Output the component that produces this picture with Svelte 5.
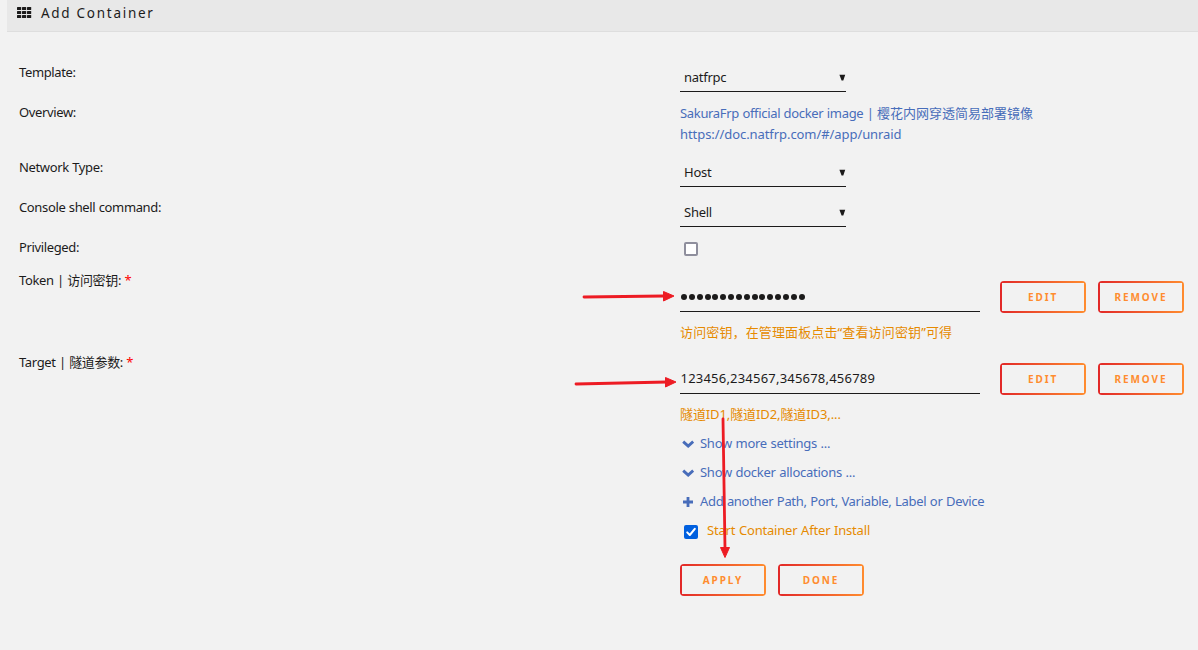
<script>
  const selects = { template: 'natfrpc', network: 'Host', shell: 'Shell' };
  const summary = 'SakuraFrp official docker image | ';
  const configs = [
    { label: 'Token | 访问密钥:', value: '●'.repeat(16), secret: true, help: '访问密钥，在管理面板点击“查看访问密钥”可得' },
    { label: 'Target | 隧道参数:', value: '123456,234567,345678,456789', secret: false, help: '隧道ID1,隧道ID2,隧道ID3,...' }
  ];
</script>

{#snippet select(value)}
  <div class="select"><span>{value}</span><svg width="7" height="7" viewBox="0 0 7 7"><path d="M0.4 0.7H6.2L4.3 6.6H2.6Z" fill="#1c1b1b" /></svg></div>
{/snippet}

{#snippet chevron()}
  <svg width="12" height="8" viewBox="0 0 12 8"><path d="M1.2 1.6L6.2 6.1L11.2 1.6" fill="none" stroke="#486dba" stroke-width="2.9" /></svg>
{/snippet}

<div class="page">
  <header>
    <svg width="15" height="11" viewBox="0 0 15 11" fill="#1c1b1b">
      {#each [0, 4, 8] as y}{#each [0, 5, 10] as x}<rect {x} {y} width="4.2" height="3" rx=".5" />{/each}{/each}
    </svg>
    <h1>Add Container</h1>
  </header>

  <main>
    <div class="row"><div class="label">Template:</div>{@render select(selects.template)}</div>
    <div class="row overview">
      <div class="label">Overview:</div>
      <div class="desc"><div><span class="d1">{summary}</span>樱花内网穿透简易部署镜像</div><div class="d2">https://doc.natfrp.com/#/app/unraid</div></div>
    </div>
    <div class="row"><div class="label">Network Type:</div>{@render select(selects.network)}</div>
    <div class="row"><div class="label">Console shell command:</div>{@render select(selects.shell)}</div>
    <div class="row privileged"><div class="label">Privileged:</div><div class="box"></div></div>

    {#each configs as c}
      <div class="row config">
        <div class="label">{c.label} <b>*</b></div>
        <div class="field">
          <div class="value" class:secret={c.secret}>
            {#if c.secret}
              {#each c.value as _}<i></i>{/each}
            {:else}{c.value}{/if}
          </div>
          <div class="help" class:cjk={c.secret}>{c.help}</div>
        </div>
        <div class="buttons"><button>EDIT</button><button>REMOVE</button></div>
      </div>
    {/each}

    <div class="actions">
      <div class="link">{@render chevron()}<span>Show more settings ...</span></div>
      <div class="link">{@render chevron()}<span>Show docker allocations ...</span></div>
      <div class="link">
        <svg width="12" height="10" viewBox="0 0 12 10"><path d="M6 0V10M1 5H11" stroke="#486dba" stroke-width="2.8" /></svg>
        <span class="add">Add another Path, Port, Variable, Label or Device</span>
      </div>
      <div class="link start">
        <svg width="14" height="14" viewBox="0 0 14 14"><rect width="14" height="14" rx="2" fill="#0060df" /><path d="M3.2 7.4L5.8 10L10.8 3.8" fill="none" stroke="#fff" stroke-width="2" stroke-linecap="round" stroke-linejoin="round" /></svg>
        <span>Start Container After Install</span>
      </div>
      <div class="buttons"><button>APPLY</button><button>DONE</button></div>
    </div>
  </main>

  <svg class="arrows" width="1198" height="650" viewBox="0 0 1198 650" fill="#ed1c24" stroke="#ed1c24">
    <path d="M584 297L664 296M576 384L667 382M723 419L725 548" fill="none" stroke-width="2.8" stroke-linecap="round" />
    <path d="M663.5 291.5L674 296L663.5 301ZM665.5 377.5L676 382L665.5 387ZM720.5 547.5L725 557.5L729.5 547.5Z" stroke-width="1" stroke-linejoin="round" />
  </svg>
</div>

<style>
  :global(body) { background: #f2f2f2; }
  .page {
    position: relative;
    box-sizing: border-box;
    width: 1198px;
    height: 650px;
    overflow: hidden;
    padding-left: 7px;
    background: #f2f2f2;
    color: #1c1b1b;
    font: 13px/21px "Noto Sans", "Noto Sans CJK SC", sans-serif;
    white-space: nowrap;
  }
  header {
    box-sizing: border-box;
    display: flex;
    align-items: center;
    height: 32px;
    padding: 0 0 4px 10px;
    gap: 9px;
    background: #e8e8e8;
    border-bottom: 1px solid #dedede;
  }
  header svg { margin-bottom: 2px; }
  h1 { margin: 0; font-size: 13.5px; font-weight: 400; letter-spacing: 1.72px; }
  main { padding: 30px 0 0 12px; }
  .row { display: grid; grid-template-columns: 661px 300px 1fr; height: 40px; align-items: start; }
  .overview { height: 55px; }
  .privileged { height: 33px; }
  .config { height: 82px; }
  .label { letter-spacing: -0.36px; word-spacing: 0.4px; }
  .label b { color: #f00; font-weight: 400; }
  .select {
    box-sizing: border-box;
    display: flex;
    align-items: center;
    justify-content: space-between;
    width: 166px;
    height: 28px;
    margin-top: 2px;
    padding: 0 0 0 4px;
    border-bottom: 1px solid #1c1b1b;
    letter-spacing: -0.25px;
  }
  .desc { padding-top: 1px; color: #486dba; }
  .d1 { letter-spacing: -0.33px; word-spacing: 0.4px; }
  .d2 { letter-spacing: -0.07px; }
  .box { box-sizing: border-box; width: 14px; height: 14px; margin: 5px 0 0 4px; border: 2px solid #8f8f9d; border-radius: 2px; background: #fff; }
  .value {
    box-sizing: border-box;
    display: flex;
    align-items: center;
    height: 31px;
    margin-top: 11px;
    padding-left: 0.5px;
    border-bottom: 1px solid #1c1b1b;
    letter-spacing: 0.21px;
  }
  .secret { gap: 1.85px; padding: 2px 0 0 1px; }
  .secret i { width: 6px; height: 6px; border-radius: 50%; background: #1c1b1b; }
  .help { margin-top: 10px; color: #e68a00; letter-spacing: -0.1px; }
  .cjk { letter-spacing: 0.13px; }
  .buttons { display: flex; gap: 12px; }
  .config .buttons { padding: 11px 0 0 20px; }
  button {
    box-sizing: border-box;
    width: 86px;
    height: 32px;
    padding: 0;
    border: 0;
    border-radius: 4px;
    background:
      linear-gradient(#f2f2f2, #f2f2f2) 2px 2px / 82px 28px no-repeat,
      linear-gradient(90deg, #e22828, #ff8c2f);
    color: #ff8c2f;
    font: 700 10px/28px "Noto Sans", sans-serif;
    letter-spacing: 1.9px;
  }
  .actions { margin: -1px 0 0 661px; color: #486dba; letter-spacing: -0.27px; word-spacing: 0.5px; }
  .add { letter-spacing: -0.32px; }
  .link { display: flex; align-items: center; height: 21px; padding-left: 2px; margin-bottom: 8px; gap: 6px; }
  .start { padding-left: 4px; gap: 9px; color: #e68a00; letter-spacing: -0.19px; }
  .start svg { margin-top: 2px; }
  .actions .buttons { padding-top: 15px; }
  .arrows { position: absolute; left: 0; top: 0; pointer-events: none; }
</style>
